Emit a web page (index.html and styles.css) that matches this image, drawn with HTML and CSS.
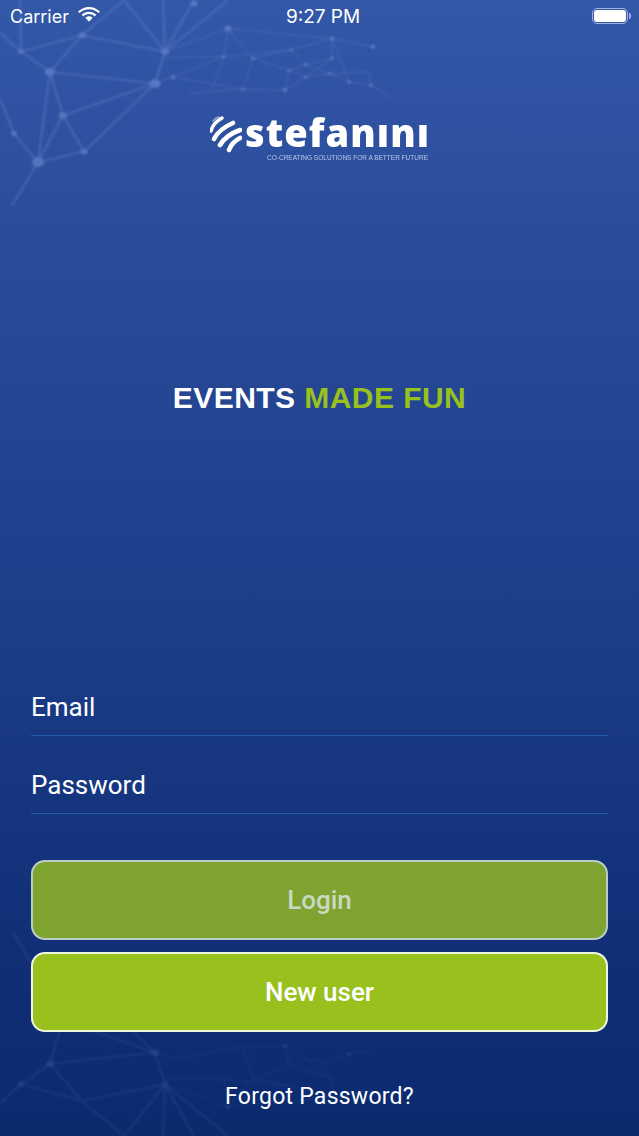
FILE: index.html
```html
<!DOCTYPE html>
<html lang="en">
<head>
    <meta charset="UTF-8">
    <meta name="viewport" content="width=device-width, initial-scale=1.0">
    <title>Stefanini Events</title>
    <link rel="stylesheet" href="styles.css">
</head>
<body>
    <div class="screen">
        <svg class="network network-top" viewBox="0 0 420 260" width="420" height="213" preserveAspectRatio="none" fill="none">
            <g class="links-big">
                <path d="M0 40L21 63L50 88L82 43L124 0L165 63L155 102L50 88L63 141L155 102L84 185L38 198L12 251"/>
                <path d="M82 43L165 63L163 0M165 63L194 0M165 63L228 0M21 63L82 43M63 141L84 185M50 88L38 198L14 163L0 120M63 141L38 198M20 0L21 63"/>
            </g>
            <g class="links-small">
                <path d="M165 63L228 35L332 47L373 57M228 35L224 69L165 70M228 35L253 71L291 61L332 47L332 71L306 94L285 110L243 109L173 94L155 102"/>
                <path d="M224 69L291 61M224 69L212 110M253 71L243 109M253 71L289 86L306 79L332 71M289 86L285 110M289 86L306 94L330 90L349 100L371 104L393 120M330 90L369 88L371 104M306 79L330 90M173 94L224 69M243 109L190 114M291 61L306 79M332 47L349 100"/>
            </g>
            <g class="dots">
                <circle cx="21" cy="63" r="3"/><circle cx="50" cy="88" r="5"/><circle cx="82" cy="43" r="3.500"/>
                <circle cx="165" cy="63" r="4"/><circle cx="155" cy="102" r="5.500"/><circle cx="63" cy="141" r="4"/>
                <circle cx="38" cy="198" r="6"/><circle cx="84" cy="185" r="3.500"/><circle cx="14" cy="163" r="3"/>
                <circle cx="194" cy="4" r="3.500"/><circle cx="228" cy="35" r="3.500"/><circle cx="332" cy="47" r="2.500"/>
                <circle cx="291" cy="61" r="2"/><circle cx="224" cy="69" r="2"/><circle cx="253" cy="71" r="2"/>
                <circle cx="289" cy="86" r="2"/><circle cx="306" cy="79" r="2"/><circle cx="332" cy="71" r="2"/>
                <circle cx="306" cy="94" r="2"/><circle cx="330" cy="90" r="2"/><circle cx="349" cy="100" r="2"/>
                <circle cx="371" cy="104" r="2"/><circle cx="285" cy="110" r="2.500"/><circle cx="243" cy="109" r="2"/>
                <circle cx="173" cy="94" r="2.500"/><circle cx="373" cy="57" r="2.500"/>
            </g>
        </svg>
        <svg class="network network-bottom" viewBox="0 0 420 260" width="420" height="213" preserveAspectRatio="none" fill="none">
            <g class="links-big">
                <path d="M0 40L21 63L50 88L82 43L124 0L165 63L155 102L50 88L63 141L155 102L84 185L38 198L12 251"/>
                <path d="M82 43L165 63L163 0M165 63L194 0M165 63L228 0M21 63L82 43M63 141L84 185"/>
            </g>
            <g class="links-small">
                <path d="M165 63L228 35L332 47L373 57M228 35L224 69L165 70M228 35L253 71L291 61L332 47L332 71L306 94L285 110L243 109L173 94L155 102"/>
                <path d="M224 69L291 61M253 71L243 109M253 71L289 86L306 79L332 71M289 86L285 110M306 94L330 90L349 100L371 104"/>
            </g>
            <g class="dots">
                <circle cx="50" cy="88" r="4"/><circle cx="165" cy="63" r="3"/><circle cx="155" cy="102" r="4"/>
                <circle cx="21" cy="63" r="3"/><circle cx="84" cy="185" r="3"/><circle cx="228" cy="35" r="2"/>
                <circle cx="285" cy="110" r="2"/><circle cx="349" cy="100" r="2"/>
            </g>
        </svg>

        <div class="status-bar">
            <div class="status-left">
                <span>Carrier</span>
                <svg class="wifi" viewBox="0 0 22 16" width="22" height="16">
                    <path d="M11 2.200C7.400 2.200 4.100 3.600 1.400 6.100L0 4.600C3 1.700 6.900 0 11 0s8 1.700 11 4.600L20.600 6.100C17.900 3.600 14.600 2.200 11 2.200z"/>
                    <path d="M11 7C9 7 7 7.800 5.300 9.400L3.700 7.800C5.700 5.800 8.300 4.700 11 4.700s5.300 1.100 7.300 3.100L16.700 9.400C15 7.800 13 7 11 7z"/>
                    <path d="M11 9.300c1.300 0 2.600.5 3.600 1.500L11 14.800 7.400 10.800c1-1 2.300-1.500 3.600-1.500z"/>
                </svg>
            </div>
            <span class="status-time">9:27 PM</span>
            <div class="battery">
                <div class="battery-level"></div>
                <div class="battery-nub"></div>
            </div>
        </div>

        <div class="logo">
            <svg class="logo-mark" viewBox="5 6 32 38" width="32" height="38">
                <path class="swirl-faint" d="M8 11Q10 8 14 7"/>
                <path class="swirl-thin" d="M6 21Q8 13 17 8"/>
                <path d="M9 29Q14 19 28 13"/>
                <path d="M15 35Q21 25 35 20"/>
                <path d="M24 40Q27 32 35 28"/>
            </svg>
            <div class="logo-words">
                <div class="logo-name">stefanını</div>
                <div class="logo-tag">CO-CREATING SOLUTIONS FOR A BETTER FUTURE</div>
            </div>
        </div>

        <h1 class="headline">EVENTS <span class="headline-green">MADE FUN</span></h1>

        <div class="form">
            <div class="field">Email</div>
            <div class="field">Password</div>
            <button class="button button-login">Login</button>
            <button class="button button-new">New user</button>
            <a class="forgot">Forgot Password?</a>
        </div>
    </div>
</body>
</html>
```

FILE: styles.css
```css
body {
    margin: 0;
    font-family: 'Roboto', sans-serif;
    color: #fff;
}

.screen {
    position: relative;
    width: 639px;
    height: 1136px;
    overflow: hidden;
    display: flex;
    flex-direction: column;
    background: linear-gradient(180deg, #3358a8 0%, #2a4c9b 20%, #1c3d88 55%, #0f2e76 85%, #0b2a6e 100%);
}

.network {
    position: absolute;
    left: 0;
    filter: blur(1px);
}

.network-top {
    top: 0;
    opacity: 0.42;
}

.network-bottom {
    bottom: 0;
    transform: scaleY(-1);
    opacity: 0.18;
}

.links-big {
    stroke: #7f9fe0;
    stroke-width: 2.5;
    opacity: 0.6;
}

.links-small {
    stroke: #7f9fe0;
    stroke-width: 1;
    opacity: 0.7;
}

.dots {
    fill: #8aaae8;
}

.status-bar {
    position: relative;
    height: 32px;
    display: flex;
    align-items: center;
    justify-content: space-between;
    padding: 0 7px 0 10px;
    font-family: 'Inter', sans-serif;
    font-size: 18px;
}

.status-left {
    width: 204px;
    display: flex;
    align-items: center;
    gap: 9px;
}

.status-time {
    font-size: 19px;
}

.wifi {
    fill: #fff;
    margin-bottom: 2px;
}

.battery {
    width: 200px;
    display: flex;
    justify-content: flex-end;
    align-items: center;
    gap: 2px;
}

.battery-level {
    width: 32px;
    height: 12px;
    margin-right: 1px;
    background: #fff;
    border-radius: 3px;
    outline: 1.5px solid #9db3e2;
    outline-offset: 1px;
}

.battery-nub {
    width: 2px;
    height: 6px;
    margin-right: 1px;
    background: #9db3e2;
    border-radius: 0 2px 2px 0;
}

.logo {
    position: relative;
    margin-top: 84px;
    margin-left: 210px;
    width: 219px;
    height: 48px;
    display: flex;
    gap: 3px;
    filter: blur(0.4px);
}

.logo-mark {
    flex: none;
    fill: none;
    stroke: #fff;
    stroke-width: 4.6;
    stroke-linecap: round;
}

.swirl-faint {
    stroke-width: 1.5;
    opacity: 0.5;
}

.swirl-thin {
    stroke-width: 3.4;
}

.logo-words {
    width: 183px;
    margin-top: -3px;
}

.logo-name {
    font-family: 'Open Sans', sans-serif;
    font-weight: 800;
    font-size: 38px;
    line-height: 38px;
    letter-spacing: 1.05px;
}

.logo-tag {
    margin-top: 2px;
    font-family: 'Liberation Sans', sans-serif;
    font-size: 6.5px;
    line-height: 9px;
    text-align: right;
    color: #b9c8e8;
    white-space: nowrap;
}

.headline {
    position: relative;
    margin: 216px 0 0;
    text-align: center;
    font-family: 'Liberation Sans', sans-serif;
    font-size: 30px;
    line-height: 36px;
    font-weight: 700;
    letter-spacing: 0.45px;
}

.headline-green {
    color: #98c11e;
}

.form {
    position: relative;
    margin: 0 31px;
    padding-top: 242px;
    display: flex;
    flex-direction: column;
}

.field {
    height: 78px;
    box-sizing: border-box;
    padding-top: 33px;
    line-height: 32px;
    font-size: 26px;
    border-bottom: 1px solid #1f5cae;
}

.button {
    height: 80px;
    font-family: 'Roboto', sans-serif;
    font-size: 26px;
    font-weight: 500;
    border-radius: 14px;
    cursor: pointer;
}

.button-login {
    margin-top: 46px;
    background: #7ea331;
    border: 2px solid #b9cdc4;
    color: #c9d8c0;
}

.button-new {
    margin-top: 12px;
    background: #98c11e;
    border: 2px solid #eef5e0;
    color: #fff;
}

.forgot {
    margin-top: 48px;
    text-align: center;
    font-size: 23px;
    line-height: 34px;
    letter-spacing: 0.25px;
}
```
